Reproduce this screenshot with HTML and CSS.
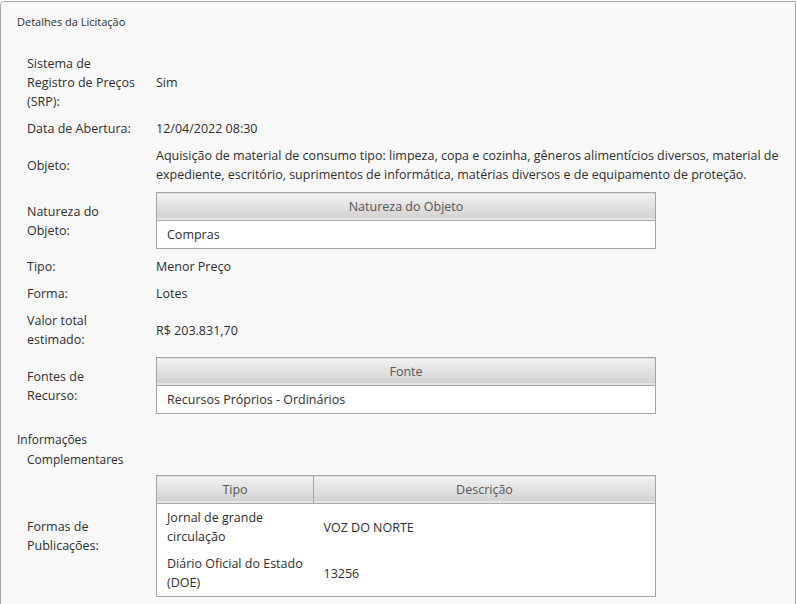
FILE: index.html
```html
<!DOCTYPE html>
<html lang="pt-BR">
<head>
<meta charset="utf-8">
<title>Detalhes da Licitação</title>
<link rel="stylesheet" href="styles.css">
</head>
<body>
<div class="panel">
  <div class="legend">Detalhes da Licitação</div>
  <div class="details">
    <div class="label">Sistema de<br>Registro de Preços<br>(SRP):</div>
    <div class="value">Sim</div>

    <div class="label">Data de Abertura:</div>
    <div class="value">12/04/2022 08:30</div>

    <div class="label">Objeto:</div>
    <div class="value">Aquisição de material de consumo tipo: limpeza, copa e cozinha, gêneros alimentícios diversos, material de expediente, escritório, suprimentos de informática, matérias diversos e de equipamento de proteção.</div>

    <div class="label">Natureza do<br>Objeto:</div>
    <div class="value">
      <table class="grid">
        <thead><tr><th>Natureza do Objeto</th></tr></thead>
        <tbody><tr><td>Compras</td></tr></tbody>
      </table>
    </div>

    <div class="label">Tipo:</div>
    <div class="value">Menor Preço</div>

    <div class="label">Forma:</div>
    <div class="value">Lotes</div>

    <div class="label">Valor total<br>estimado:</div>
    <div class="value">R$ 203.831,70</div>

    <div class="label">Fontes de<br>Recurso:</div>
    <div class="value">
      <table class="grid">
        <thead><tr><th>Fonte</th></tr></thead>
        <tbody><tr><td>Recursos Próprios - Ordinários</td></tr></tbody>
      </table>
    </div>
  </div>

  <div class="subsection">
    <div class="sub-title">Informações</div>
    <div class="sub-title-2">Complementares</div>
  </div>

  <div class="details details-2">
    <div class="label">Formas de<br>Publicações:</div>
    <div class="value">
      <table class="grid">
        <colgroup><col class="col-tipo"><col></colgroup>
        <thead><tr><th>Tipo</th><th>Descrição</th></tr></thead>
        <tbody>
          <tr><td>Jornal de grande<br>circulação</td><td>VOZ DO NORTE</td></tr>
          <tr><td>Diário Oficial do Estado<br>(DOE)</td><td>13256</td></tr>
        </tbody>
      </table>
    </div>
  </div>
</div>
</body>
</html>
```

FILE: styles.css
```css
html, body {
  margin: 0;
  padding: 0;
  background: #ffffff;
}

body {
  font-family: "Open Sans", "Noto Sans", sans-serif;
  font-size: 12.5px;
  line-height: 19px;
  color: #2e2e2e;
}

.panel {
  box-sizing: border-box;
  width: 796px;
  min-height: 620px;
  margin-top: 1px;
  background: #f8f8f8;
  border: 1px solid #a8a8a8;
  border-top-left-radius: 4px;
  padding: 11px 0 0 0;
}

.legend {
  padding-left: 16px;
  font-size: 11px;
  line-height: 18px;
}

.details {
  display: grid;
  grid-template-columns: 129px 1fr;
  row-gap: 8px;
  align-items: center;
  padding: 23px 6px 0 26px;
}

.details-2 {
  padding-top: 5px;
}

.grid {
  width: 500px;
  border-collapse: collapse;
  border: 1px solid #a3a3a3;
  background: #ffffff;
}

.grid th {
  font-weight: normal;
  color: #555555;
  text-align: center;
  padding: 4px 10px;
  height: 19px;
  background: linear-gradient(#f2f2f2, #cfcfcf);
  border-bottom: 1px solid #a8a8a8;
  box-shadow: inset 0 -2px 0 #e6e6e6;
}

.grid th + th {
  border-left: 1px solid #a3a3a3;
}

.grid td {
  text-align: left;
  padding: 4px 10px;
  vertical-align: middle;
}

.col-tipo {
  width: 157px;
}

.subsection {
  padding: 16px 0 0 16px;
  font-size: 12px;
  line-height: 20px;
}

.sub-title-2 {
  padding-left: 10px;
}
```
